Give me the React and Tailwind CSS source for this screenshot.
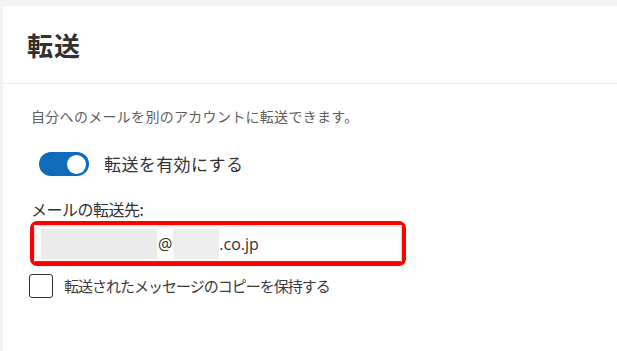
export default function App() {
  const font = { fontFamily: '"Noto Sans CJK JP", "Noto Sans", sans-serif' }
  return (
    <div className="w-[617px] h-[351px] bg-[#f3f3f3] pt-[6px] pl-[3px] overflow-hidden" style={font}>
      <div className="bg-white h-full text-[#323130]">
        {/* header */}
        <div className="h-[78px] flex items-center px-[24px] border-b border-[#edebe9]">
          <h1 className="text-[26px] font-semibold leading-[34px] tracking-[1px]">転送</h1>
        </div>
        {/* body */}
        <div className="pl-[28px] pt-[22px]">
          <p className="text-[14px] leading-[20px] text-[#605e5c] tracking-[0.3px]">自分へのメールを別のアカウントに転送できます。</p>

          <div className="flex items-center mt-[26px] ml-[8px] h-[24px]">
            <div className="w-[50px] h-[24px] rounded-full bg-[#0f6cbd] flex items-center justify-end pr-[3px]">
              <div className="w-[19px] h-[19px] rounded-full bg-white"></div>
            </div>
            <span className="ml-[15px] text-[17px] leading-[22px] tracking-[0.4px]">転送を有効にする</span>
          </div>

          <div className="mt-[22px] text-[16px] leading-[22px] tracking-[-0.5px]">メールの転送先:</div>

          <div className="mt-[1px] -ml-[1px] w-[376px] h-[45px] border-[4px] border-[#ff0000] rounded-[7px]">
            <div className="h-full flex items-center pl-[6px] border border-[#e1dfdd] border-b-[#605e5c] shadow-[inset_0_0_3px_rgba(0,0,0,0.12)] bg-white">
              <span className="w-[116px] h-[30px] bg-[#ebebeb]"></span>
              <span className="text-[16px] pl-[1px]" style={{ fontFamily: '"Open Sans", "Liberation Sans", sans-serif' }}>@</span>
              <span className="w-[46px] h-[30px] bg-[#eeeeee] ml-[1px]"></span>
              <span className="text-[16px]" style={{ fontFamily: '"Open Sans", "Liberation Sans", sans-serif' }}>.co.jp</span>
            </div>
          </div>

          <div className="flex items-center mt-[8px] -ml-[2px]">
            <div className="w-[24px] h-[24px] border border-[#323130] rounded-[3px]"></div>
            <span className="ml-[11px] text-[15px] leading-[22px] tracking-[-1px] text-[#3b3a39]">転送されたメッセージのコピーを保持する</span>
          </div>
        </div>
      </div>
    </div>
  )
}
